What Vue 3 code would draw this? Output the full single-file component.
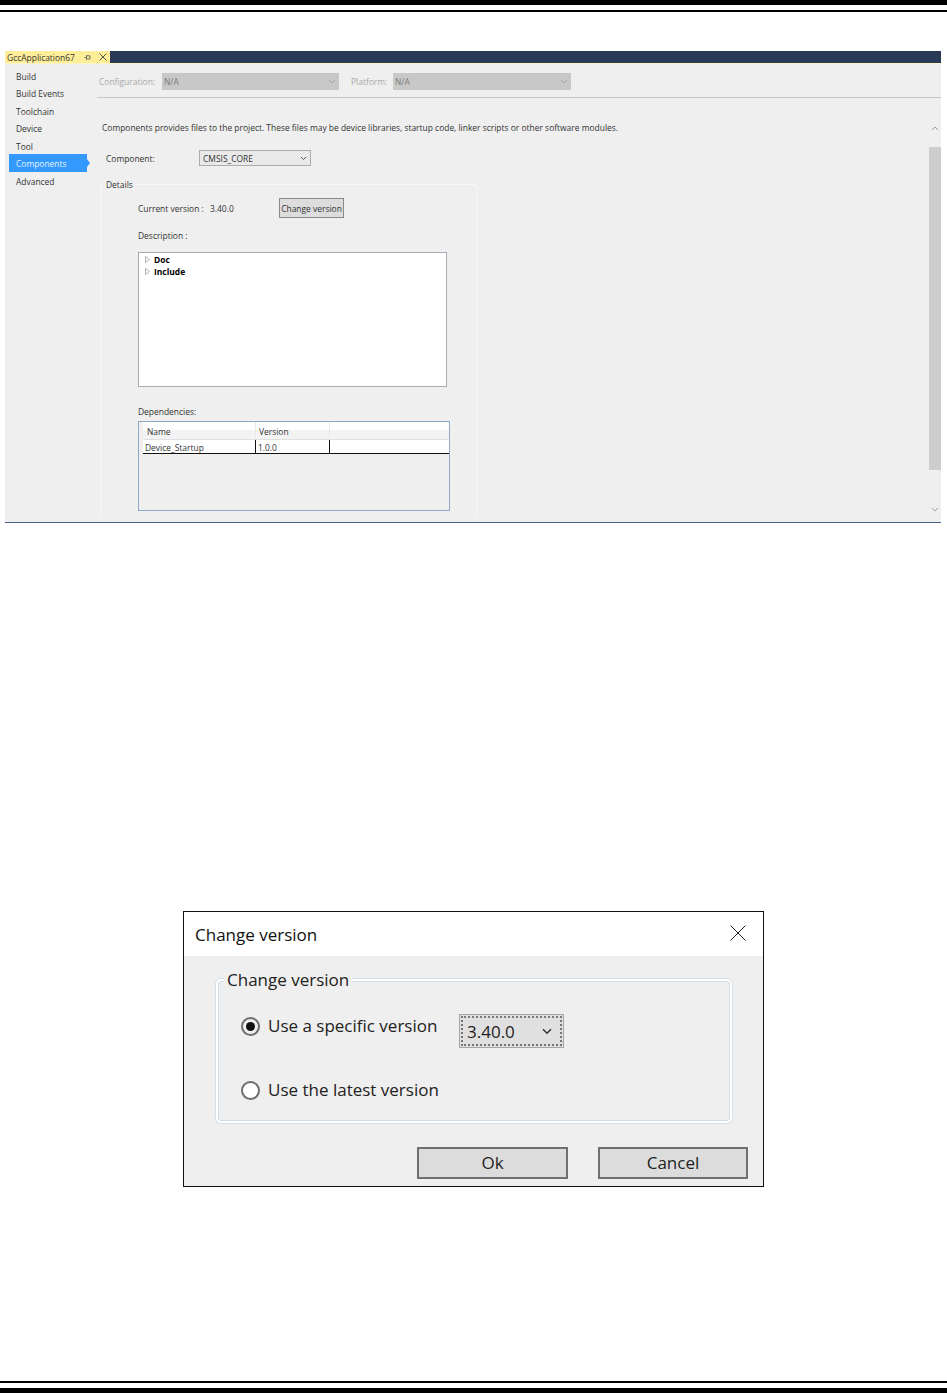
<template>
  <div class="page">
    <div class="rule-thick"></div>
    <div class="rule-thin rule-thin-top"></div>

    <!-- project properties screenshot -->
    <section class="shot">
      <div class="tabstrip">
        <div class="tab">
          <span class="tab-name">GccApplication67</span>
          <svg class="tab-pin" width="7" height="7" viewBox="0 0 7 7"><path d="M0.5 3.5H2.5M2.5 1.2V5.8M2.5 1.8H6V5H2.5" fill="none" stroke="#555" stroke-width="0.8"/></svg>
          <svg class="tab-close" width="8" height="8" viewBox="0 0 8 8"><path d="M0.5 0.5L7.5 7.5M7.5 0.5L0.5 7.5" stroke="#444" stroke-width="0.9"/></svg>
        </div>
      </div>

      <div class="panel">
        <nav class="side">
          <div
            v-for="item in sideItems"
            :key="item"
            class="side-item"
            :class="{ active: item === 'Components' }"
          >{{ item }}</div>
        </nav>

        <div class="content">
          <div class="config-row">
            <span class="config-label">Configuration:</span>
            <div class="config-select sel-config">N/A<svg class="chev" width="8" height="5" viewBox="0 0 8 5"><path d="M1 1L4 4L7 1" fill="none" stroke="#a8a8a8"/></svg></div>
            <span class="config-label label-platform">Platform:</span>
            <div class="config-select sel-platform">N/A<svg class="chev" width="8" height="5" viewBox="0 0 8 5"><path d="M1 1L4 4L7 1" fill="none" stroke="#a8a8a8"/></svg></div>
          </div>

          <div class="content-body">
            <div class="main">
              <p class="intro">Components provides files to the project. These files may be device libraries, startup code, linker scripts or other software modules.</p>

              <div class="component-row">
                <span class="component-label">Component:</span>
                <div class="component-select">CMSIS_CORE<svg class="chev" width="7" height="5" viewBox="0 0 7 5"><path d="M1 1L3.5 3.5L6 1" fill="none" stroke="#555"/></svg></div>
              </div>

              <div class="details">
                <span class="details-legend">Details</span>
                <div class="version-row">
                  <span class="version-label">Current version :</span>
                  <span class="version-value">3.40.0</span>
                  <div class="change-btn">Change version</div>
                </div>
                <div class="desc-label">Description :</div>
                <div class="tree">
                  <div v-for="node in treeNodes" :key="node" class="tree-node">
                    <svg width="5" height="7" viewBox="0 0 5 7"><path d="M0.5 0.5L4.5 3.5L0.5 6.5Z" fill="#fff" stroke="#a0a0a0" stroke-width="0.8"/></svg>
                    <strong>{{ node }}</strong>
                  </div>
                </div>
                <div class="dep-label">Dependencies:</div>
                <div class="dep-table">
                  <div class="dep-head">
                    <span class="col-name">Name</span>
                    <span class="col-version">Version</span>
                    <span class="col-rest"></span>
                  </div>
                  <div class="dep-row">
                    <span class="col-name">Device_Startup</span>
                    <span class="col-version">1.0.0</span>
                    <span class="col-rest"></span>
                  </div>
                </div>
              </div>
            </div>

            <div class="scrollbar">
              <svg class="scroll-arrow" width="8" height="5" viewBox="0 0 8 5"><path d="M1 4L4 1L7 4" fill="none" stroke="#a0a0a0"/></svg>
              <div class="scroll-track"><div class="scroll-thumb"></div></div>
              <svg class="scroll-arrow" width="8" height="5" viewBox="0 0 8 5"><path d="M1 1L4 4L7 1" fill="none" stroke="#a0a0a0"/></svg>
            </div>
          </div>
        </div>
      </div>
    </section>

    <!-- change version dialog -->
    <section class="dialog">
      <header class="dialog-title">
        <span>Change version</span>
        <svg width="16" height="16" viewBox="0 0 16 16"><path d="M0.5 0.5L15.5 15.5M15.5 0.5L0.5 15.5" stroke="#222" stroke-width="1"/></svg>
      </header>
      <div class="dialog-body">
        <div class="group">
          <span class="group-legend">Change version</span>
          <div class="radio-row row-specific">
            <span class="radio checked"></span>
            <span class="radio-text">Use a specific version</span>
            <div class="version-select">
              <div class="version-inner">3.40.0<svg width="10" height="7" viewBox="0 0 10 7"><path d="M1 1.2L5 5.2L9 1.2" fill="none" stroke="#333" stroke-width="1.5"/></svg></div>
            </div>
          </div>
          <div class="radio-row row-latest">
            <span class="radio"></span>
            <span class="radio-text">Use the latest version</span>
          </div>
        </div>
        <div class="dialog-actions">
          <div class="dialog-btn">Ok</div>
          <div class="dialog-btn">Cancel</div>
        </div>
      </div>
    </section>

    <div class="rule-thin rule-thin-bottom"></div>
    <div class="rule-thick"></div>
  </div>
</template>

<script setup>
const sideItems = ['Build', 'Build Events', 'Toolchain', 'Device', 'Tool', 'Components', 'Advanced']
const treeNodes = ['Doc', 'Include']
</script>

<style scoped>
.page {
  width: 947px;
  height: 1393px;
  display: flex;
  flex-direction: column;
  background: #fff;
  font-family: "Open Sans", "Noto Sans", sans-serif;
  overflow: hidden;
}

/* === RULES === */
.rule-thick { height: 5px; background: #000; flex-shrink: 0; }
.rule-thin { height: 2px; background: #000; flex-shrink: 0; }
.rule-thin-top { margin-top: 5px; }
.rule-thin-bottom { margin-top: auto; margin-bottom: 5px; }

/* === SCREENSHOT === */
.shot {
  width: 936px;
  height: 472px;
  margin: 39px 0 0 5px;
  display: flex;
  flex-direction: column;
  background: #efefef;
  border-bottom: 1px solid #47618f;
  box-sizing: border-box;
  font-size: 8.45px;
  color: #333;
}
.tabstrip { height: 12px; background: #2a3a56; flex-shrink: 0; box-shadow: 0 1px 0 #fdf6c8; }
.tab {
  width: 105px;
  height: 12px;
  background: #ffee99;
  display: flex;
  align-items: center;
  padding-left: 2px;
  box-sizing: border-box;
  color: #333;
}
.tab-name { width: 77px; white-space: nowrap; }
.tab-close { margin-left: 8px; }

.panel { flex: 1; display: flex; min-height: 0; }

/* === SIDEBAR === */
.side { width: 92px; padding-top: 3.5px; flex-shrink: 0; }
.side-item {
  height: 17.5px;
  line-height: 19px;
  margin-left: 4px;
  width: 78px;
  padding-left: 7px;
  box-sizing: border-box;
  position: relative;
  white-space: nowrap;
}
.side-item.active { background: #3399ff; color: #e8f3ff; }
.side-item.active::after {
  content: "";
  position: absolute;
  left: 100%;
  top: 5px;
  border-left: 3px solid #3399ff;
  border-top: 4px solid transparent;
  border-bottom: 4px solid transparent;
}

/* === CONTENT === */
.content { flex: 1; min-width: 0; display: flex; flex-direction: column; }
.config-row {
  height: 32px;
  padding-top: 2px;
  border-bottom: 1px solid #c8c8c8;
  display: flex;
  align-items: center;
  box-sizing: content-box;
  padding-left: 2px;
  flex-shrink: 0;
}
.config-label { color: #a8a8a8; width: 63px; white-space: nowrap; }
.label-platform { width: 42px; margin-left: 12px; }
.config-select {
  height: 17px;
  line-height: 17px;
  background: #c8c8c8;
  color: #7a7a7a;
  padding-left: 2px;
  box-sizing: border-box;
  display: flex;
  align-items: center;
  justify-content: space-between;
}
.sel-config { width: 177px; }
.sel-platform { width: 178px; }
.chev { margin-right: 3px; flex-shrink: 0; }

.content-body { flex: 1; display: flex; min-height: 0; }
.main { flex: 1; min-width: 0; padding-left: 5px; }
.intro { margin: 24px 0 0; line-height: 12px; white-space: nowrap; color: #333; }

.component-row { display: flex; align-items: center; height: 16px; margin-top: 16px; }
.component-label { width: 97px; padding-left: 4px; box-sizing: border-box; }
.component-select {
  width: 112px;
  height: 16px;
  background: #e9e9e9;
  border: 1px solid #acacac;
  box-sizing: border-box;
  padding-left: 3px;
  display: flex;
  align-items: center;
  justify-content: space-between;
}

/* === DETAILS GROUP === */
.details {
  width: 377px;
  height: 331px;
  margin: 18px 0 0 -2px;
  border: 1px solid #f8f8f8;
  border-bottom: none;
  border-radius: 2px 2px 0 0;
  box-sizing: border-box;
  position: relative;
  padding: 13px 0 0 37px;
}
.details-legend {
  position: absolute;
  left: 4px;
  top: -6px;
  background: #efefef;
  padding: 0 1px;
  line-height: 12px;
}
.version-row { display: flex; align-items: center; height: 20px; }
.version-label { width: 72px; white-space: nowrap; padding-top: 1px; }
.version-value { width: 69px; padding-top: 1px; }
.change-btn {
  width: 65px;
  height: 20px;
  line-height: 19px;
  text-align: center;
  background: #dddddd;
  border: 1px solid #8a8a8a;
  box-sizing: border-box;
  white-space: nowrap;
}
.desc-label { margin-top: 12px; line-height: 12px; }
.tree {
  width: 309px;
  height: 135px;
  margin-top: 10px;
  background: #fff;
  border: 1px solid #a8abb5;
  box-sizing: border-box;
  padding: 0 0 0 7px;
}
.tree-node {
  display: flex;
  align-items: center;
  gap: 4px;
  height: 12px;
  color: #000;
}
.tree-node svg { margin-left: -1px; }
.dep-label { margin-top: 19px; line-height: 12px; }
.dep-table {
  width: 312px;
  height: 90px;
  margin-top: 3px;
  border: 1px solid #90a9c8;
  box-sizing: border-box;
  padding-left: 4px;
}
.dep-head {
  display: flex;
  height: 18px;
  background: linear-gradient(#ffffff 50%, #f3f3f3 50%);
  border-bottom: 1px solid #e0e0e0;
  box-sizing: border-box;
  align-items: center;
}
.dep-head span { height: 100%; line-height: 20px; border-right: 1px solid #e8e8e8; box-sizing: border-box; }
.dep-row {
  display: flex;
  height: 14px;
  background: #fff;
  border-bottom: 1px solid #111;
  box-sizing: border-box;
}
.dep-row span { line-height: 15px; border-right: 1px solid #111; box-sizing: border-box; padding-left: 2px; }
.col-name { width: 113px; }
.col-version { width: 74px; }
.col-rest { flex: 1; border-right: none !important; }
.dep-head .col-name { padding-left: 4px; }
.dep-head .col-version { padding-left: 3px; }

/* === SCROLLBAR === */
.scrollbar {
  width: 12px;
  display: flex;
  flex-direction: column;
  align-items: center;
  padding-top: 28px;
  flex-shrink: 0;
}
.scroll-arrow { flex-shrink: 0; }
.scroll-track { flex: 1; width: 100%; padding-top: 16px; }
.scroll-thumb { height: 323px; background: #cdcdcd; }
.scrollbar > .scroll-arrow:last-child { margin-bottom: 10px; }

/* === DIALOG === */
.dialog {
  width: 581px;
  height: 276px;
  margin: 388px 0 0 183px;
  border: 1px solid #111;
  box-sizing: border-box;
  display: flex;
  flex-direction: column;
  font-size: 17px;
  color: #222;
}
.dialog-title {
  height: 44px;
  background: #fff;
  display: flex;
  align-items: center;
  justify-content: space-between;
  padding: 0 17px 0 11px;
  flex-shrink: 0;
  color: #111;
}
.dialog-title svg { margin-bottom: 3px; }
.dialog-body { flex: 1; background: #efefef; padding: 23px 15px 0 32px; }

.group {
  width: 516px;
  height: 144px;
  border: 2px solid #fff;
  border-radius: 5px;
  box-sizing: border-box;
  position: relative;
  padding-left: 23px;
  box-shadow: 0 0 0 1px #d6e0e8, inset 0 0 0 1px #d0dce6;
}
.group-legend {
  position: absolute;
  left: 6px;
  top: -13px;
  padding: 0 3px;
  background: #efefef;
  line-height: 24px;
}
.radio-row { display: flex; align-items: center; }
.row-specific { margin-top: 33px; height: 34px; }
.row-latest { margin-top: 30px; height: 24px; }
.radio {
  width: 19px;
  height: 19px;
  border: 2px solid #6f6f6f;
  border-radius: 50%;
  background: #fff;
  box-sizing: border-box;
  flex-shrink: 0;
  position: relative;
}
.row-specific .radio { margin-top: -10px; background: #efefef; }
.radio.checked::after {
  content: "";
  position: absolute;
  left: 3px;
  top: 3px;
  width: 9px;
  height: 9px;
  border-radius: 50%;
  background: #111;
}
.radio-text { margin-left: 8px; width: 191px; white-space: nowrap; margin-top: -2px; }
.row-specific .radio-text { margin-top: -11px; }
.version-select {
  width: 105px;
  height: 34px;
  background: #e0e0e0;
  border: 1px solid #a5a5a5;
  box-sizing: border-box;
  padding: 1px;
}
.version-inner {
  height: 100%;
  border: 2px dotted #777;
  box-sizing: border-box;
  padding: 0 8px 0 4px;
  display: flex;
  align-items: center;
  justify-content: space-between;
}

.dialog-actions { display: flex; justify-content: flex-end; gap: 30px; margin-top: 24px; }
.dialog-btn {
  width: 151px;
  height: 32px;
  line-height: 27px;
  text-align: center;
  background: #dcdcdc;
  border: 2px solid #707070;
  box-sizing: border-box;
}
.dialog-btn + .dialog-btn { width: 150px; }
</style>
